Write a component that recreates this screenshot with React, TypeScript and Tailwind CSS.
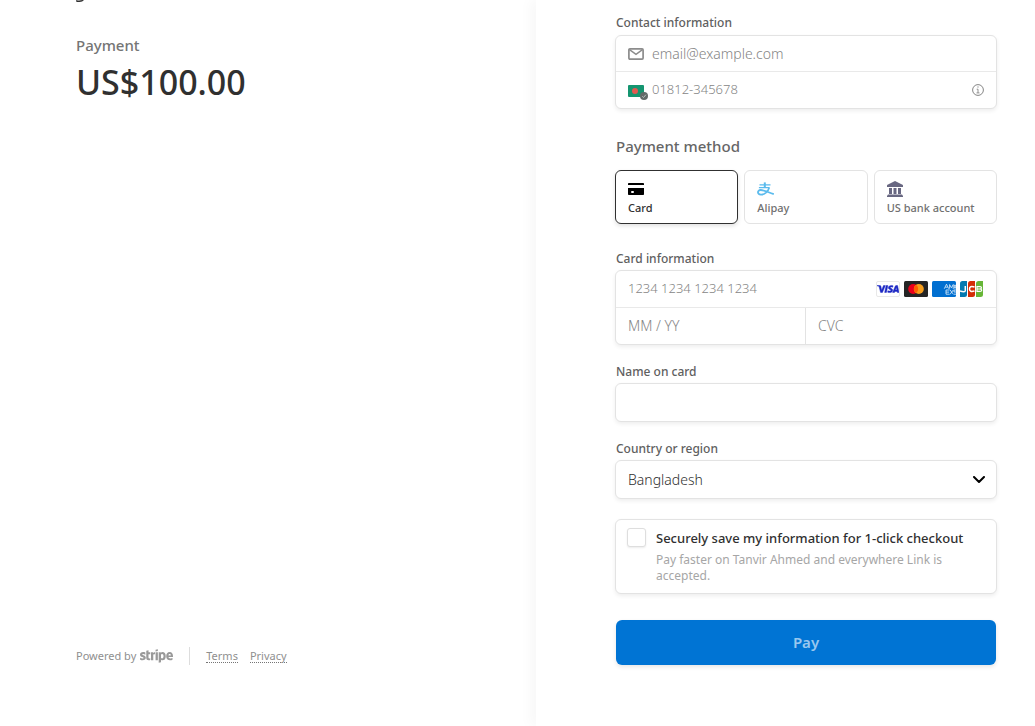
import type { ReactNode } from 'react'
import { FaStripe } from 'react-icons/fa'
import { SiVisa } from 'react-icons/si'

const boxStyle = 'rounded-[6px] border border-[#e3e3e3] bg-white shadow-[0_2px_4px_rgba(0,0,0,0.07)]'
const inputStyle = 'min-w-0 flex-1 bg-transparent font-light text-[#303030] outline-none placeholder:text-[#858585]'
const labelStyle = 'block px-px text-xs leading-[22px] font-medium text-[#606060]'

function MailIcon() {
  return (
    <svg viewBox="0 0 16 12" className="h-3 w-4 shrink-0" fill="none" stroke="#8c8c8c" strokeWidth="1.7">
      <rect x="0.9" y="0.9" width="14.2" height="10.2" rx="1" />
      <path d="M1.5 1.6 8 6.4l6.5-4.8" strokeWidth="1.4" />
    </svg>
  )
}

function FlagIcon() {
  return (
    <svg viewBox="0 0 20 15" className="-mr-1 mt-1 h-[15px] w-5 shrink-0">
      <rect width="16" height="12" rx="1" fill="#159570" />
      <circle cx="7" cy="6" r="3" fill="#e25950" />
      <circle cx="16" cy="11" r="4" fill="#626b69" />
      <path d="m14.3 11.3 1.2 1.2 2.400-2.800" fill="none" stroke="#b9c0be" />
    </svg>
  )
}

function InfoIcon() {
  return (
    <svg viewBox="0 0 12 12" className="h-3 w-3" fill="none" stroke="#858585">
      <circle cx="6" cy="6" r="5.4" />
      <path d="M4.7 5.2H6v3.6M4.5 8.9h3" strokeWidth="0.9" />
      <path d="M5.4 3h1.2" strokeWidth="1.2" />
    </svg>
  )
}

function CardIcon() {
  return (
    <svg viewBox="0 0 16 12" className="h-3 w-4" fill="#000">
      <path d="M0 .8Q0 0 .8 0h14.4q.8 0 .8.8V2H0zM0 5h16v6.2q0 .8-.8.8H.8Q0 12 0 11.2z" />
      <rect x="3" y="8" width="3" height="2" rx="1" fill="#fff" />
    </svg>
  )
}

function AlipayIcon() {
  return (
    <svg viewBox="0 0 18 14" className="h-3.5 w-[18px]" fill="none" stroke="#5bbbed">
      <path d="M2.5 2.8h11M1.9 5.6h10.6" strokeWidth="1.3" />
      <path d="M7.8.4v5.2" strokeWidth="2" />
      <path d="M12.2 5.6C11.2 9.5 7.5 12.8 3.8 12.6.2 12.4-.1 8.2 3.6 8c3.7-.1 7 2.2 13.2 4.2" strokeWidth="1.8" />
    </svg>
  )
}

function BankIcon() {
  return (
    <svg viewBox="0 0 16 16" className="h-4 w-4" fill="#686781">
      <path d="M8 0 15.5 3.7q.5.3.5.8V6H0V4.5q0-.5.5-.8z" />
      <path d="M2 7h3v6H2zM6.5 7h3v6h-3zM11 7h3v6h-3zM1 13.5h14l1 1.5v1H0v-1z" />
    </svg>
  )
}

function CardBrands() {
  return (
    <div className="flex gap-1">
      <span className="flex h-4 w-6 items-center justify-center rounded-[2px] border border-[#e8e8e8] bg-white">
        <SiVisa className="h-[22px] w-[22px] shrink-0 text-[#1c28c4]" stroke="#1c28c4" strokeWidth="0.5" />
      </span>
      <svg viewBox="0 0 24 16" className="h-4 w-6">
        <rect width="24" height="16" rx="1.5" fill="#252525" />
        <circle cx="9.2" cy="8" r="5" fill="#eb001b" />
        <circle cx="14.8" cy="8" r="5" fill="#f79e1b" />
        <path d="M12 3.860a5 5 0 0 1 0 8.280 5 5 0 0 1 0-8.280" fill="#ff5f00" />
      </svg>
      <svg viewBox="0 0 24 16" className="h-4 w-6">
        <rect width="24" height="16" rx="1.5" fill="#016fd0" />
        <g fill="none" stroke="#e4f1fb" strokeWidth="0.8">
          <path d="m12.3 7.7 2.200-4.500 2.200 4.500M13.300 6.200h2.400M17.600 7.700V3.600l1.800 3.200 1.800-3.200v4.100M22 3.600l2 4.100M22 7.700l2-4.100" />
          <path d="M17.500 9H14v4.200h3.500M14 11.100h3M18 8.800l3.400 4.600M21.400 8.800 18 13.400M24 9h-2v2h2M22 13.200h2" />
        </g>
      </svg>
      <svg viewBox="0 0 24 16" className="h-4 w-6">
        <path d="M2.5 0H7v13.5Q7 16 4.5 16H0V2.5Q0 0 2.500 0" fill="#047ab1" />
        <path d="M10.5 0H15v13.5Q15 16 12.5 16H8V2.5Q8 0 10.500 0" fill="#d42d06" />
        <path d="M18.5 0H23v13.5Q23 16 20.5 16H16V2.5Q16 0 18.500 0" fill="#67b637" />
        <g fill="none" stroke="#fff" strokeWidth="1.5">
          <path d="M5.300 5v4.500q0 1.300-1.500 1.300-2 0-3.800-.8M14.500 6q-5-1.500-5 2t5 2" />
          <path d="M17 5.700h3q1.500 0 1.500 1.100T20 8h-3 3q1.700 0 1.700 1.200T20 10.400h-3zV8" strokeWidth="1.2" />
        </g>
      </svg>
    </div>
  )
}

interface MethodProps {
  icon: ReactNode
  label: string
  selected?: boolean
}

function Method({ icon, label, selected }: MethodProps) {
  return (
    <button
      type="button"
      className={`flex h-[54px] flex-col items-start rounded-[6px] border bg-white pt-2.5 pl-3 text-left ${selected ? 'border-[#303030] text-[#303030] shadow-[0_2px_4px_rgba(0,0,0,0.12)]' : 'border-[#e3e3e3] text-[#707070]'}`}
    >
      <span className="flex h-4 items-center">{icon}</span>
      <span className="mt-[3px] text-[11px] leading-4 font-medium whitespace-nowrap">{label}</span>
    </button>
  )
}

function Summary() {
  return (
    <section className="flex flex-col pl-[76px]">
      <svg viewBox="0 0 8 3" className="h-[3px] w-2">
        <path d="M0 0q1 .6 3 .4L6.500 0H8Q6.500 2 3.500 2H.5z" fill="#303030" />
      </svg>
      <p className="mt-[30px] text-[15px] leading-6 font-medium text-[#757575]">Payment</p>
      <h1 className="mt-[3px] text-[34px] leading-[44px] font-medium text-[#303030]">US$100.00</h1>
      <footer className="mt-auto mb-[61px] flex h-[18px] items-center text-[11px] text-[#8f8f8f]">
        <span>Powered by</span>
        <FaStripe aria-label="stripe" className="ml-1 h-7 w-[33px] text-[#999999]" />
        <span className="mx-4 h-[18px] w-px bg-[#dddddd]" />
        <a href="#terms" className="border-b border-dotted border-[#757575] leading-3">Terms</a>
        <a href="#privacy" className="ml-3 border-b border-dotted border-[#757575] leading-3">Privacy</a>
      </footer>
    </section>
  )
}

function CheckoutForm() {
  return (
    <form className="pt-3 pr-[38px] pl-[79px] shadow-[-6px_0_12px_rgba(0,0,0,0.03)]">
      <label htmlFor="email" className={labelStyle}>Contact information</label>
      <div className={`${boxStyle} mt-px`}>
        <div className="flex h-9 items-center gap-2 border-b border-[#e9e9e9] px-3">
          <MailIcon />
          <input id="email" type="email" placeholder="email@example.com" className={`${inputStyle} text-sm`} />
        </div>
        <div className="flex h-9 items-center gap-2 px-3">
          <FlagIcon />
          <input type="tel" aria-label="Phone number" placeholder="01812-345678" className={`${inputStyle} text-[13px]`} />
          <button type="button" aria-label="Phone number info"><InfoIcon /></button>
        </div>
      </div>

      <h2 className="mt-[25px] px-px text-[15px] leading-6 font-medium text-[#666666]">Payment method</h2>
      <div className="mt-3 grid grid-cols-3 gap-1.5">
        <Method icon={<CardIcon />} label="Card" selected />
        <Method icon={<AlipayIcon />} label="Alipay" />
        <Method icon={<BankIcon />} label="US bank account" />
      </div>

      <label htmlFor="card" className={`${labelStyle} mt-6`}>Card information</label>
      <div className={boxStyle}>
        <div className="flex h-[37px] items-center border-b border-[#e9e9e9] px-3">
          <input id="card" placeholder="1234 1234 1234 1234" className={`${inputStyle} text-[13px]`} />
          <CardBrands />
        </div>
        <div className="grid h-9 grid-cols-2">
          <div className="flex border-r border-[#e3e3e3] px-3">
            <input aria-label="Expiration" placeholder="MM / YY" className={`${inputStyle} text-sm`} />
          </div>
          <div className="flex px-3">
            <input aria-label="CVC" placeholder="CVC" className={`${inputStyle} text-sm`} />
          </div>
        </div>
      </div>

      <label htmlFor="name" className={`${labelStyle} mt-4`}>Name on card</label>
      <div className={`${boxStyle} flex h-[39px] px-3`}>
        <input id="name" className={`${inputStyle} text-sm`} />
      </div>

      <label htmlFor="country" className={`${labelStyle} mt-4`}>Country or region</label>
      <div className="relative">
        <select id="country" className={`${boxStyle} block h-[39px] w-full appearance-none px-3 text-sm font-light text-[#303030]`}>
          <option>Bangladesh</option>
        </select>
        <svg viewBox="0 0 12 8" className="pointer-events-none absolute top-4 right-3 h-2 w-3" fill="none" stroke="#000" strokeWidth="2">
          <path d="m1 1 5 5 5-5" strokeLinecap="round" strokeLinejoin="round" />
        </svg>
      </div>

      <div className={`${boxStyle} mt-5 flex h-[75px] items-start px-[11px] pt-2`}>
        <input
          id="save"
          type="checkbox"
          className="h-[19px] w-[19px] shrink-0 appearance-none rounded-[3px] border border-[#dedede] bg-white shadow-[0_1px_2px_rgba(0,0,0,0.08)]"
        />
        <div className="ml-2.5">
          <label htmlFor="save" className="block text-[13px] leading-5 font-medium whitespace-nowrap text-[#303030]">
            Securely save my information for 1-click checkout
          </label>
          <p className="mt-1 text-xs leading-4 text-[#a6a6a6]">
            Pay faster on Tanvir Ahmed and everywhere Link is accepted.
          </p>
        </div>
      </div>

      <div className="mt-[26px] flex px-px">
        <button
          type="submit"
          className="h-[45px] flex-1 rounded-[6px] bg-[#0074d4] text-[15px] font-semibold text-[#99c7ee] shadow-[0_2px_4px_rgba(0,0,0,0.1)]"
        >
          Pay
        </button>
      </div>
    </form>
  )
}

export default function App() {
  return (
    <main className="grid min-h-screen grid-cols-[536fr_499fr] overflow-hidden bg-white font-['Noto_Sans','Open_Sans',sans-serif]">
      <Summary />
      <CheckoutForm />
    </main>
  )
}
